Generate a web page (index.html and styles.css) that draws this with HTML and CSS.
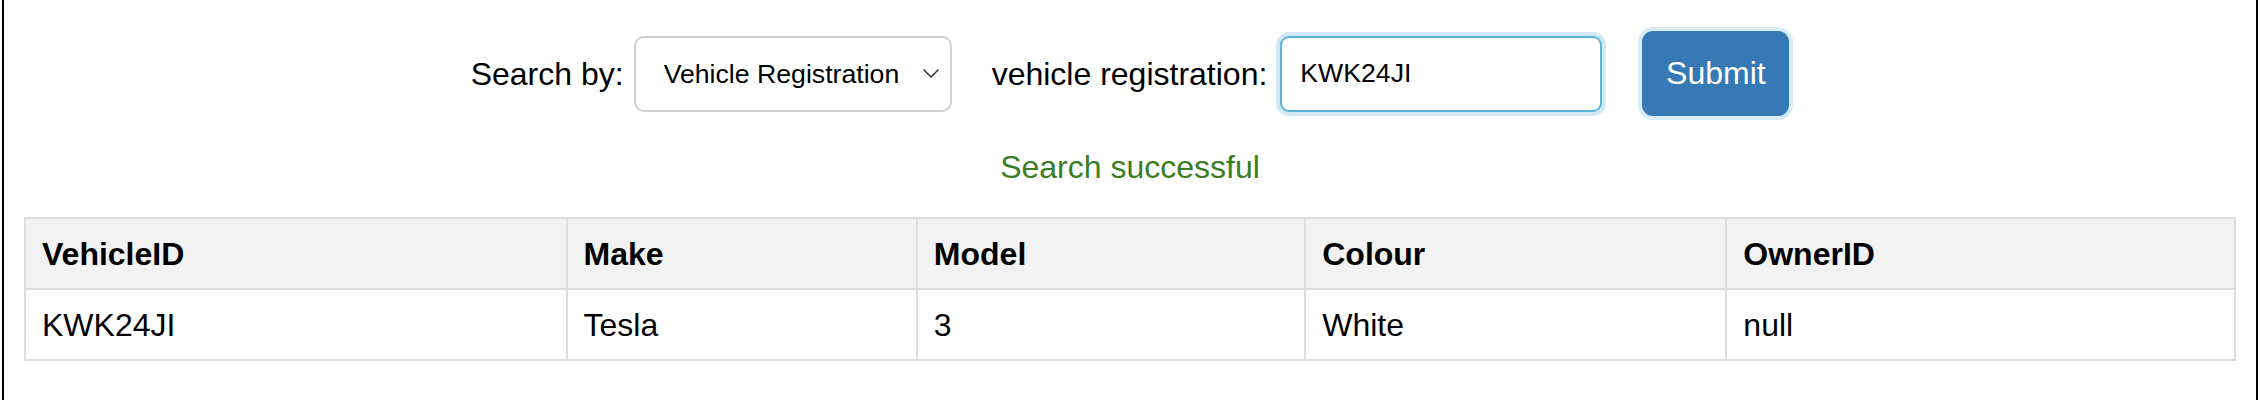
FILE: index.html
```html
<!DOCTYPE html>
<html lang="en">
<head>
<meta charset="utf-8">
<title>Vehicle search</title>
<link rel="stylesheet" href="styles.css">
</head>
<body>
<div class="page">
  <form class="search-form">
    <label class="label label-search" for="searchBy">Search by:</label>
    <select id="searchBy" class="select">
      <option>Vehicle Registration</option>
    </select>
    <label class="label label-reg" for="reg">vehicle registration:</label>
    <input id="reg" class="text-input" type="text" value="KWK24JI">
    <button type="button" class="submit">Submit</button>
  </form>
  <p class="message">Search successful</p>
  <table class="results">
    <thead>
      <tr>
        <th>VehicleID</th>
        <th>Make</th>
        <th>Model</th>
        <th>Colour</th>
        <th>OwnerID</th>
      </tr>
    </thead>
    <tbody>
      <tr>
        <td>KWK24JI</td>
        <td>Tesla</td>
        <td>3</td>
        <td>White</td>
        <td>null</td>
      </tr>
    </tbody>
  </table>
</div>
</body>
</html>
```

FILE: styles.css
```css
html, body {
  margin: 0;
  padding: 0;
  background: #fff;
}

body {
  font-family: "Liberation Sans", Arial, Helvetica, sans-serif;
  font-size: 32px;
  color: #000;
}

.page {
  margin: 0 2px;
  border-left: 2px solid #000;
  border-right: 2px solid #000;
  min-height: 400px;
  padding: 0 20px;
  box-sizing: border-box;
}

.search-form {
  display: flex;
  justify-content: center;
  align-items: center;
  padding-top: 31px;
}

.label {
  line-height: 37px;
  padding-top: 2px;
}

.label-search {
  margin-right: 10px;
}

.label-reg {
  margin-right: 13px;
}

.select {
  appearance: none;
  -webkit-appearance: none;
  width: 318px;
  height: 76px;
  box-sizing: border-box;
  margin: 0 40px 0 0;
  padding: 0 40px 0 28px;
  border: 2px solid #cfcfcf;
  border-radius: 10px;
  background-color: #fff;
  background-image: url("data:image/svg+xml,%3Csvg xmlns='http://www.w3.org/2000/svg' width='18' height='11' viewBox='0 0 18 11'%3E%3Cpath d='M1.5 1.5 L9 9 L16.5 1.5' fill='none' stroke='%23333' stroke-width='1.5'/%3E%3C/svg%3E");
  background-repeat: no-repeat;
  background-position: right 10px center;
  background-size: 18px 11px;
  font-family: "Liberation Sans", Arial, Helvetica, sans-serif;
  font-size: 26.67px;
  color: #000;
}

.text-input {
  width: 322px;
  height: 76px;
  box-sizing: border-box;
  margin: 0 40px 0 0;
  padding: 0 18px;
  border: 2px solid #5ab4dd;
  border-radius: 9px;
  box-shadow: 0 0 0 4px #d3eaf6;
  outline: none;
  font-family: "Liberation Sans", Arial, Helvetica, sans-serif;
  font-size: 26.67px;
  color: #000;
  background: #fff;
}

.submit {
  width: 147px;
  height: 85px;
  box-sizing: border-box;
  margin: 0;
  padding: 0;
  border: none;
  border-radius: 11px;
  background: #3779b4;
  box-shadow: 0 0 0 4px #d6ecf7;
  color: #fff;
  font-family: "Liberation Sans", Arial, Helvetica, sans-serif;
  font-size: 32px;
}

.message {
  margin: 33px 0 0;
  text-align: center;
  line-height: 37px;
  color: #3a7d23;
}

.results {
  margin-top: 31px;
  width: 100%;
  border-collapse: collapse;
}

.results th,
.results td {
  border: 2px solid #dddddd;
  padding: 17px 16px 15px;
  text-align: left;
  line-height: 37px;
}

.results th {
  background: #f2f2f2;
  font-weight: bold;
}
```
